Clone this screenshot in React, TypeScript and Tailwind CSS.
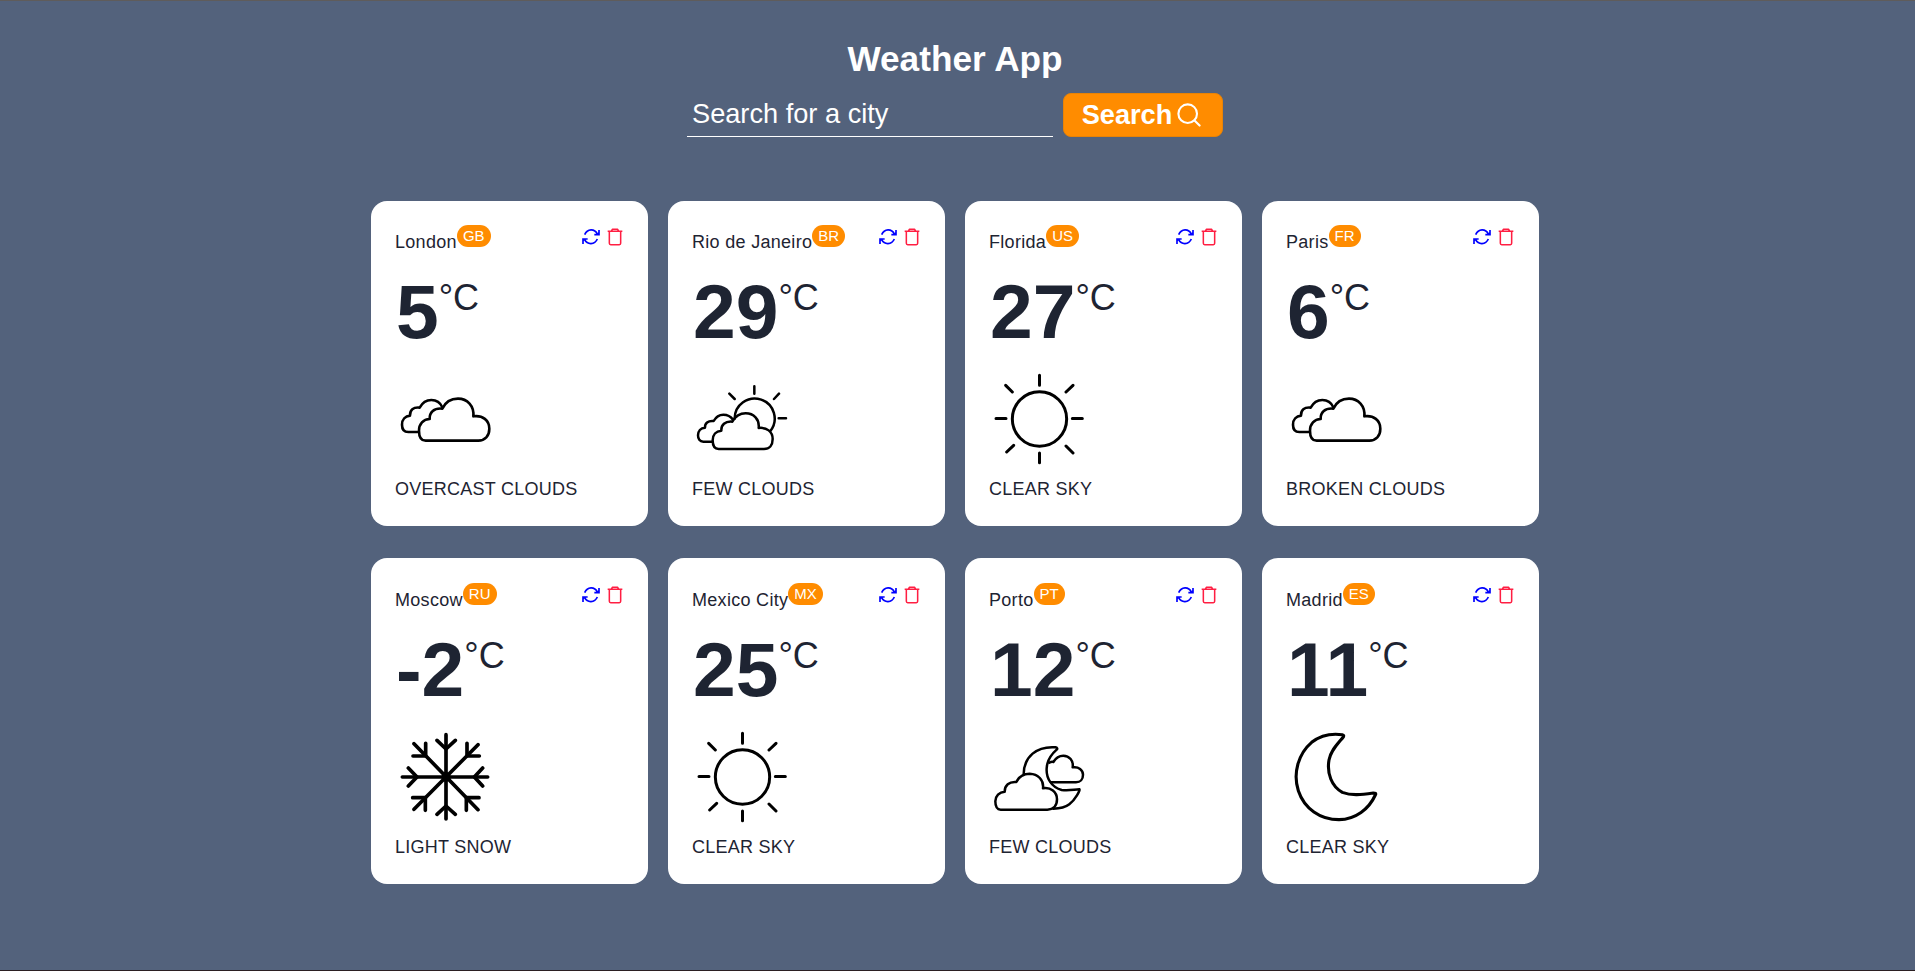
import type { ReactNode } from "react";

type Condition = "clouds" | "sunClouds" | "sun" | "snow" | "moonClouds" | "moon";

interface City {
  name: string;
  country: string;
  temp: number;
  condition: Condition;
  description: string;
}

const cities: City[] = [
  { name: "London", country: "GB", temp: 5, condition: "clouds", description: "overcast clouds" },
  { name: "Rio de Janeiro", country: "BR", temp: 29, condition: "sunClouds", description: "few clouds" },
  { name: "Florida", country: "US", temp: 27, condition: "sun", description: "clear sky" },
  { name: "Paris", country: "FR", temp: 6, condition: "clouds", description: "broken clouds" },
  { name: "Moscow", country: "RU", temp: -2, condition: "snow", description: "light snow" },
  { name: "Mexico City", country: "MX", temp: 25, condition: "sun", description: "clear sky" },
  { name: "Porto", country: "PT", temp: 12, condition: "moonClouds", description: "few clouds" },
  { name: "Madrid", country: "ES", temp: 11, condition: "moon", description: "clear sky" },
];

const drawings: Record<Condition, { viewBox: string; strokeWidth: number; shapes: ReactNode }> = {
  clouds: {
    viewBox: "105 537 300 300",
    strokeWidth: 7.8,
    shapes: (
      <>
        <path d="M174 726H145C132 726 126 717 126 704C126 688 136 678 150 677C149 660 160 651 179 653C187 638 199 630 214 630C230 630 241 638 247 652" />
        <path d="M197 752C184 752 177 740 177 722C177 702 190 688 209 687C208 668 222 653 247 656C256 637 273 626 294 626C322 626 343 648 340 679C368 675 388 691 388 716C388 738 375 752 355 752Z" />
      </>
    ),
  },
  sunClouds: {
    viewBox: "96 537 300 300",
    strokeWidth: 7.5,
    shapes: (
      <>
        <path d="M224 686A60 60 0 1 1 331 723" />
        <path d="M283 589V611M208 611L224 627M357 611L342 627M356 685H378" />
        <path d="M156 755H130C119 755 114 746 114 736C114 724 122 714 135 713C134 700 144 691 161 693C168 680 178 674 190 674C203 674 212 679 219 689" />
        <path d="M176 777C163 777 158 766 158 751C158 735 168 723 184 722C183 705 195 693 217 695C226 679 239 670 257 670C281 670 299 688 296 714C320 711 338 725 338 747C338 766 328 777 312 777Z" />
      </>
    ),
  },
  sun: {
    viewBox: "87 537 300 300",
    strokeWidth: 9,
    shapes: (
      <>
        <circle cx="238.5" cy="687" r="81.5" />
        <path d="M238.5 556V586M238.5 789V818M108 685.5H138M337 685.5H367M137 586L157 606M339 586L318 606M161 766L140 786M318 768L339 789" />
      </>
    ),
  },
  snow: {
    viewBox: "105 531 300 300",
    strokeWidth: 11,
    shapes: (
      <>
        <path d="M258 554V807M127 681H383M162 581L354 779M354 584L162 778" />
        <path d="M231 571L258 597L286 571M231 793L258 768L286 793M145 654L171 681L145 708M368 654L343 681L368 708" />
        <path d="M197 580V618H159M321 580V618H358M158 743H196V781M357 743H319V781" />
        <circle cx="258" cy="681" r="8" fill="currentColor" />
      </>
    ),
  },
  moonClouds: {
    viewBox: "87 531 300 300",
    strokeWidth: 7.5,
    shapes: (
      <>
        <path d="M191 672C192 620 230 588 286 592C292 593 293 596 290 599C273 614 261 630 260 655C258 685 275 712 305 720C325 723 340 719 358 718C362 719 345 750 328 763C315 773 298 776 280 776" />
        <path d="M268 638C272 636 276 635 280 636C287 624 298 617 310 617C328 617 341 632 338 652C356 649 369 660 369 674C369 688 361 697 348 697H273" />
        <path d="M122 779C110 779 106 767 106 754C106 738 118 726 134 725C134 706 147 694 169 696C177 679 191 671 209 671C234 672 252 690 249 715C272 711 291 726 291 748C291 768 280 779 262 779Z" />
      </>
    ),
  },
  moon: {
    viewBox: "93 531 300 300",
    strokeWidth: 9.3,
    shapes: (
      <path d="M262 554C232 550 200 553 170 577C130 611 113 670 130 722C148 776 196 809 252 809C302 808 342 777 361 735C364 730 360 729 355 729C320 734 290 738 262 727C230 710 215 670 222 630C228 600 248 582 265 561C267 557 266 555 262 554Z" />
    ),
  },
};

function WeatherIcon({ condition }: { condition: Condition }) {
  const { viewBox, strokeWidth, shapes } = drawings[condition];
  return (
    <svg
      viewBox={viewBox}
      className="size-[100px] text-black"
      fill="none"
      stroke="currentColor"
      strokeWidth={strokeWidth}
      strokeLinecap="round"
      strokeLinejoin="round"
    >
      {shapes}
    </svg>
  );
}

function RefreshIcon() {
  return (
    <svg viewBox="0 0 54 54" className="size-[18px]" fill="none" stroke="currentColor" strokeWidth="5">
      <path d="M8 20C16 1 38 1 46 18M51 6V20H37M46 33C38 51 16 51 8 35M3 48V33H17" />
      <path d="M44 16L51 13V20ZM10 37L3 39V33Z" fill="currentColor" stroke="none" />
    </svg>
  );
}

function TrashIcon() {
  return (
    <svg viewBox="0 0 54 54" className="size-[18px]" fill="none" stroke="currentColor" strokeWidth="4.6" strokeLinejoin="round">
      <path d="M5 10H49M16 10L19 4H35L38 10M10 10V46C10 49 12 50 14 50H40C42 50 44 49 44 46V10" />
    </svg>
  );
}

function SearchIcon() {
  return (
    <svg viewBox="0 0 24 24" className="size-6" fill="none" stroke="currentColor" strokeWidth="2.1" strokeLinecap="round">
      <circle cx="10.7" cy="10.7" r="9.3" />
      <path d="M17.5 17.5L22.6 22.6" />
    </svg>
  );
}

function CityCard({ city }: { city: City }) {
  return (
    <li className="flex h-[325.4px] flex-col rounded-[16px] bg-white px-6 pt-[24.2px] text-[#1e2432]">
      <div className="flex h-[34px] items-start justify-between">
        <h2 className="flex text-[18px] tracking-[0.3px]">
          <span className="leading-[34px]">{city.name}</span>
          <sup className="top-0 h-[22px] rounded-[16px] bg-[#ff8c00] px-1.5 text-[15px] leading-[21px] tracking-normal text-white">
            {city.country}
          </sup>
        </h2>
        <div className="flex gap-[6px] pt-[3px]">
          <button type="button" aria-label="Refresh" className="text-[#0000ff]">
            <RefreshIcon />
          </button>
          <button type="button" aria-label="Delete" className="text-[#ff1e42]">
            <TrashIcon />
          </button>
        </div>
      </div>
      <div className="flex h-[110px] items-start pt-[9px] pl-px">
        <span className="text-[76.8px] leading-[86px] font-bold">{city.temp}</span>
        <span className="pt-[9px] text-[36px] leading-[42px]">°C</span>
      </div>
      <WeatherIcon condition={city.condition} />
      <p className="mt-2 text-[18px] leading-6 tracking-[0.25px] uppercase">{city.description}</p>
    </li>
  );
}

export default function App() {
  return (
    <div className="flex h-[971px] flex-col overflow-hidden border-t border-b border-t-[#5f5c5b] border-b-[#2b1f22] bg-[#53627c] pr-[5px] font-['Liberation_Sans',Arial,sans-serif]">
      <header className="flex flex-col items-center pt-[38px] text-white">
        <h1 className="text-[35.2px] leading-10 font-bold">Weather App</h1>
        <form className="mt-[14px] flex h-11 gap-[10px]">
          <input
            type="text"
            placeholder="Search for a city"
            className="w-[366px] border-b border-white bg-transparent px-[5px] text-[27.2px] placeholder:text-white placeholder:opacity-100 focus:outline-none"
          />
          <button
            type="button"
            className="flex w-[160px] items-center justify-center gap-[5px] rounded-lg border border-[#e88305] bg-[#ff8c00] pr-[3px] text-[27.2px] leading-none font-bold"
          >
            <span>Search</span>
            <SearchIcon />
          </button>
        </form>
      </header>
      <ul className="mx-auto mt-16 grid grid-cols-[repeat(4,277px)] gap-x-5 gap-y-8">
        {cities.map((city) => (
          <CityCard key={city.name} city={city} />
        ))}
      </ul>
    </div>
  );
}
